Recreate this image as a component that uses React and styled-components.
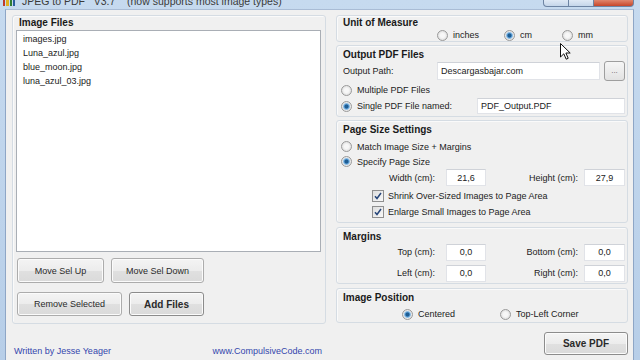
import styled, { createGlobalStyle } from "styled-components";

const GlobalStyle = createGlobalStyle`
  html, body {
    margin: 0;
    padding: 0;
    background: #b8cfe9;
  }
  * {
    box-sizing: border-box;
  }
`;

const FILES = ["images.jpg", "Luna_azul.jpg", "blue_moon.jpg", "luna_azul_03.jpg"];

const Window = styled.div`
  position: relative;
  width: 640px;
  height: 360px;
  overflow: hidden;
  display: flex;
  flex-direction: column;
  font-family: "Liberation Sans", Arial, sans-serif;
  font-size: 9px;
  color: #222;
  background: linear-gradient(#c6daef, #b7cee8);
`;

const TitleBar = styled.div`
  height: 9px;
  display: flex;
  align-items: flex-start;
  padding-left: 3px;
  overflow: hidden;
`;

const AppIcon = styled.div`
  width: 12px;
  height: 6px;
  margin-right: 7px;
  display: flex;
  gap: 1px;
  span {
    flex: 1;
  }
  span:nth-child(1) { background: #c0392b; }
  span:nth-child(2) { background: #e0b020; }
  span:nth-child(3) { background: #2f7d32; }
  span:nth-child(4) { background: #2a5d9f; }
`;

const Title = styled.div`
  margin-top: -5px;
  font-family: "Liberation Sans", Arial, sans-serif;
  font-size: 10.5px;
  line-height: 12px;
  color: #3a3a3a;
  white-space: pre;
`;

const Controls = styled.div`
  margin-left: auto;
  margin-right: 6px;
  display: flex;
  height: 7px;
`;

const CtlButton = styled.div`
  width: ${(p) => p.$w}px;
  height: 7px;
  border: 1px solid #6d84a3;
  border-top: none;
  margin-left: -1px;
  background: ${(p) =>
    p.$close
      ? "linear-gradient(#e0866d, #c7462a)"
      : "linear-gradient(#dfe9f5, #c5d6ea)"};
  border-radius: ${(p) => p.$r || "0"};
`;

const Frame = styled.div`
  flex: 1;
  display: flex;
  padding: 0 7px 0 5px;
`;

const Client = styled.div`
  flex: 1;
  display: flex;
  gap: 10px;
  padding: 5px 5px 0 6px;
  background: #f0f0f0;
  border-left: 1px solid #8ea6c6;
  border-right: 1px solid #8ea6c6;
  border-top: 1px solid #a9bcd5;
`;

const LeftCol = styled.div`
  width: 314px;
  display: flex;
  flex-direction: column;
`;

const RightCol = styled.div`
  width: 292px;
  display: flex;
  flex-direction: column;
`;

const Group = styled.div`
  height: ${(p) => p.$h}px;
  margin-top: ${(p) => p.$mt || 0}px;
  border: 1px solid #d5dce3;
  border-radius: 3px;
  box-shadow: inset 1px 1px 0 #fafafa;
  padding: ${(p) => p.$pt || 0}px 2px 0 ${(p) => p.$pl ?? 6}px;
  display: flex;
  flex-direction: column;
`;

const GroupLabel = styled.div`
  font-weight: bold;
  font-size: 10px;
  line-height: 13px;
  height: 13px;
  color: #1a1a1a;
  padding-left: ${(p) => p.$pl || 0}px;
`;

const ListBox = styled.div`
  width: 305px;
  height: 222px;
  margin-top: 1px;
  background: #fff;
  border: 1px solid #a9aeb5;
  padding: 1px 6px;
`;

const ListItem = styled.div`
  line-height: 14px;
  height: 14px;
  color: #222;
`;

const ButtonRow = styled.div`
  display: flex;
  gap: 7px;
  margin-top: ${(p) => p.$mt}px;
  margin-left: 1px;
`;

const Button = styled.div`
  width: ${(p) => p.$w}px;
  height: ${(p) => p.$h || 24}px;
  display: flex;
  align-items: center;
  justify-content: center;
  border: 1px solid ${(p) => (p.$bold ? "#8c8c8c" : "#acacac")};
  border-radius: 3px;
  background: linear-gradient(#f4f4f4, #ececec 50%, #e0e0e0 51%, #dadada);
  box-shadow: inset 0 0 0 1px #fbfbfb;
  font-weight: ${(p) => (p.$bold ? "bold" : "normal")};
  font-size: ${(p) => (p.$bold ? 10 : 9)}px;
  color: #2a2a2a;
`;

const Footer = styled.div`
  margin-top: 20px;
  display: flex;
  justify-content: space-between;
  padding: 0 4px 0 2px;
  line-height: 14px;
  color: #3446ad;
`;

const Row = styled.div`
  display: flex;
  align-items: center;
  height: ${(p) => p.$h}px;
  margin-top: ${(p) => p.$mt || 0}px;
  margin-left: ${(p) => p.$ml || 0}px;
  gap: ${(p) => p.$gap || 0}px;
`;

const OptionGrid = styled.div`
  display: grid;
  grid-template-columns: ${(p) => p.$cols};
  align-items: center;
  height: ${(p) => p.$h}px;
  margin-top: ${(p) => p.$mt || 0}px;
  margin-left: ${(p) => p.$ml || 0}px;
`;

const Option = styled.div`
  display: flex;
  align-items: center;
  gap: 5px;
  white-space: nowrap;
`;

const Radio = styled.span`
  width: 11px;
  height: 11px;
  flex: 0 0 11px;
  border-radius: 50%;
  border: 1px solid #9a9a9a;
  background: ${(p) =>
    p.$on
      ? "radial-gradient(circle, #1f5d93 0 1.6px, #5fa2d9 2.4px, #a8cbe8 3.3px, #eaeaea 3.8px, #dadada)"
      : "radial-gradient(circle, #f7f7f7 0 2px, #dedede 5px)"};
`;

const Check = styled.span`
  width: 12px;
  height: 12px;
  flex: 0 0 12px;
  border: 1px solid #8f8f8f;
  background: linear-gradient(135deg, #dedede, #f8f8f8);
  display: flex;
  align-items: center;
  justify-content: center;
`;

const FieldLabel = styled.div`
  width: ${(p) => p.$w}px;
  flex: 0 0 ${(p) => p.$w}px;
`;

const TextBox = styled.div`
  width: ${(p) => p.$w}px;
  height: ${(p) => p.$h || 17}px;
  margin-left: ${(p) => (p.$push ? "auto" : "0")};
  background: #fff;
  border: 1px solid #e1e3e8;
  border-top-color: #cfd2d8;
  display: flex;
  align-items: center;
  justify-content: ${(p) => (p.$center ? "center" : "flex-start")};
  padding-left: ${(p) => (p.$center ? 0 : 3)}px;
  color: #222;
`;

const SmallButton = styled.div`
  width: 21px;
  height: 20px;
  margin-left: 4px;
  border: 1px solid #9e9e9e;
  border-radius: 3px;
  background: linear-gradient(#f6f6f6, #e2e2e2);
  font-size: 8px;
  color: #666;
  display: flex;
  align-items: center;
  justify-content: center;
  padding-bottom: 2px;
`;

const SizeGrid = styled.div`
  display: grid;
  grid-template-columns: 103px 40px 98px 41px;
  align-items: center;
  height: ${(p) => p.$h}px;
  margin-top: ${(p) => p.$mt || 0}px;
`;

const SizeLabel = styled.div`
  text-align: right;
  padding-right: ${(p) => p.$pr}px;
  white-space: nowrap;
`;

const SaveRow = styled.div`
  margin-top: 9px;
  display: flex;
  justify-content: flex-end;
`;

const Cursor = styled.svg`
  position: absolute;
  left: 560px;
  top: 43px;
`;

function CheckMark() {
  return (
    <svg width="8" height="8" viewBox="0 0 8 8">
      <path d="M1 4.2 L3 6.5 L7 1" fill="none" stroke="#27467a" strokeWidth="1.5" />
    </svg>
  );
}

function Opt({ on, children }) {
  return (
    <Option>
      <Radio $on={on} />
      <span>{children}</span>
    </Option>
  );
}

function SizeRow({ a, av, b, bv, h, mt }) {
  return (
    <SizeGrid $h={h} $mt={mt}>
      <SizeLabel $pr={11}>{a}</SizeLabel>
      <TextBox $w={40} $center>{av}</TextBox>
      <SizeLabel $pr={6}>{b}</SizeLabel>
      <TextBox $w={41} $center>{bv}</TextBox>
    </SizeGrid>
  );
}

export default function App() {
  return (
    <Window>
      <GlobalStyle />
      <TitleBar>
        <AppIcon>
          <span />
          <span />
          <span />
          <span />
        </AppIcon>
        <Title>{"JPEG to PDF   V3.7    (now supports most image types)"}</Title>
        <Controls>
          <CtlButton $w={26} $r="0 0 0 4px" />
          <CtlButton $w={26} />
          <CtlButton $w={41} $close $r="0 0 4px 0" />
        </Controls>
      </TitleBar>
      <Frame>
        <Client>
          <LeftCol>
            <Group $h={309} $pl={3}>
              <GroupLabel $pl={3}>Image Files</GroupLabel>
              <ListBox>
                {FILES.map((f) => (
                  <ListItem key={f}>{f}</ListItem>
                ))}
              </ListBox>
              <ButtonRow $mt={6}>
                <Button $w={87} $h={25}>Move Sel Up</Button>
                <Button $w={93} $h={25}>Move Sel Down</Button>
              </ButtonRow>
              <ButtonRow $mt={9}>
                <Button $w={105}>Remove Selected</Button>
                <Button $w={75} $bold>Add Files</Button>
              </ButtonRow>
            </Group>
            <Footer>
              <span>Written by Jesse Yeager</span>
              <span>www.CompulsiveCode.com</span>
            </Footer>
          </LeftCol>

          <RightCol>
            <Group $h={27}>
              <GroupLabel>Unit of Measure</GroupLabel>
              <OptionGrid $h={13} $ml={94} $cols="67px 58px auto">
                <Opt>inches</Opt>
                <Opt on>cm</Opt>
                <Opt>mm</Opt>
              </OptionGrid>
            </Group>

            <Group $h={72} $mt={3} $pt={2}>
              <GroupLabel>Output PDF Files</GroupLabel>
              <Row $h={20}>
                <FieldLabel $w={94}>Output Path:</FieldLabel>
                <TextBox $w={163} $h={18}>Descargasbajar.com</TextBox>
                <SmallButton>...</SmallButton>
              </Row>
              <Row $h={16} $mt={1} $ml={-2}>
                <Opt>Multiple PDF Files</Opt>
              </Row>
              <Row $h={16} $ml={-2}>
                <Opt on>Single PDF File named:</Opt>
                <TextBox $w={148} $h={16} $push>PDF_Output.PDF</TextBox>
              </Row>
            </Group>

            <Group $h={103} $mt={3} $pt={2}>
              <GroupLabel>Page Size Settings</GroupLabel>
              <Row $h={15} $mt={3} $ml={-2}>
                <Opt>Match Image Size + Margins</Opt>
              </Row>
              <Row $h={15} $ml={-2}>
                <Opt on>Specify Page Size</Opt>
              </Row>
              <SizeRow h={17} a="Width (cm):" av="21,6" b="Height (cm):" bv="27,9" />
              <Row $h={16} $mt={2} $ml={29} $gap={4}>
                <Check>
                  <CheckMark />
                </Check>
                <span>Shrink Over-Sized Images to Page Area</span>
              </Row>
              <Row $h={16} $ml={29} $gap={4}>
                <Check>
                  <CheckMark />
                </Check>
                <span>Enlarge Small Images to Page Area</span>
              </Row>
            </Group>

            <Group $h={57} $mt={4} $pt={2}>
              <GroupLabel>Margins</GroupLabel>
              <SizeRow h={18} a="Top (cm):" av="0,0" b="Bottom (cm):" bv="0,0" />
              <SizeRow h={18} mt={3} a="Left (cm):" av="0,0" b="Right (cm):" bv="0,0" />
            </Group>

            <Group $h={35} $mt={4} $pt={2}>
              <GroupLabel>Image Position</GroupLabel>
              <OptionGrid $h={16} $mt={2} $ml={59} $cols="98px auto">
                <Opt on>Centered</Opt>
                <Opt>Top-Left Corner</Opt>
              </OptionGrid>
            </Group>

            <SaveRow>
              <Button $w={84} $h={23} $bold>Save PDF</Button>
            </SaveRow>
          </RightCol>
        </Client>
      </Frame>
      <Cursor width="12" height="18" viewBox="0 0 12 18">
        <path
          d="M0.5 0.5 L0.5 14 L3.8 10.8 L6.2 16.2 L8.2 15.3 L5.9 10 L10.2 10 Z"
          fill="#fff"
          stroke="#111"
          strokeWidth="1"
        />
      </Cursor>
    </Window>
  );
}
